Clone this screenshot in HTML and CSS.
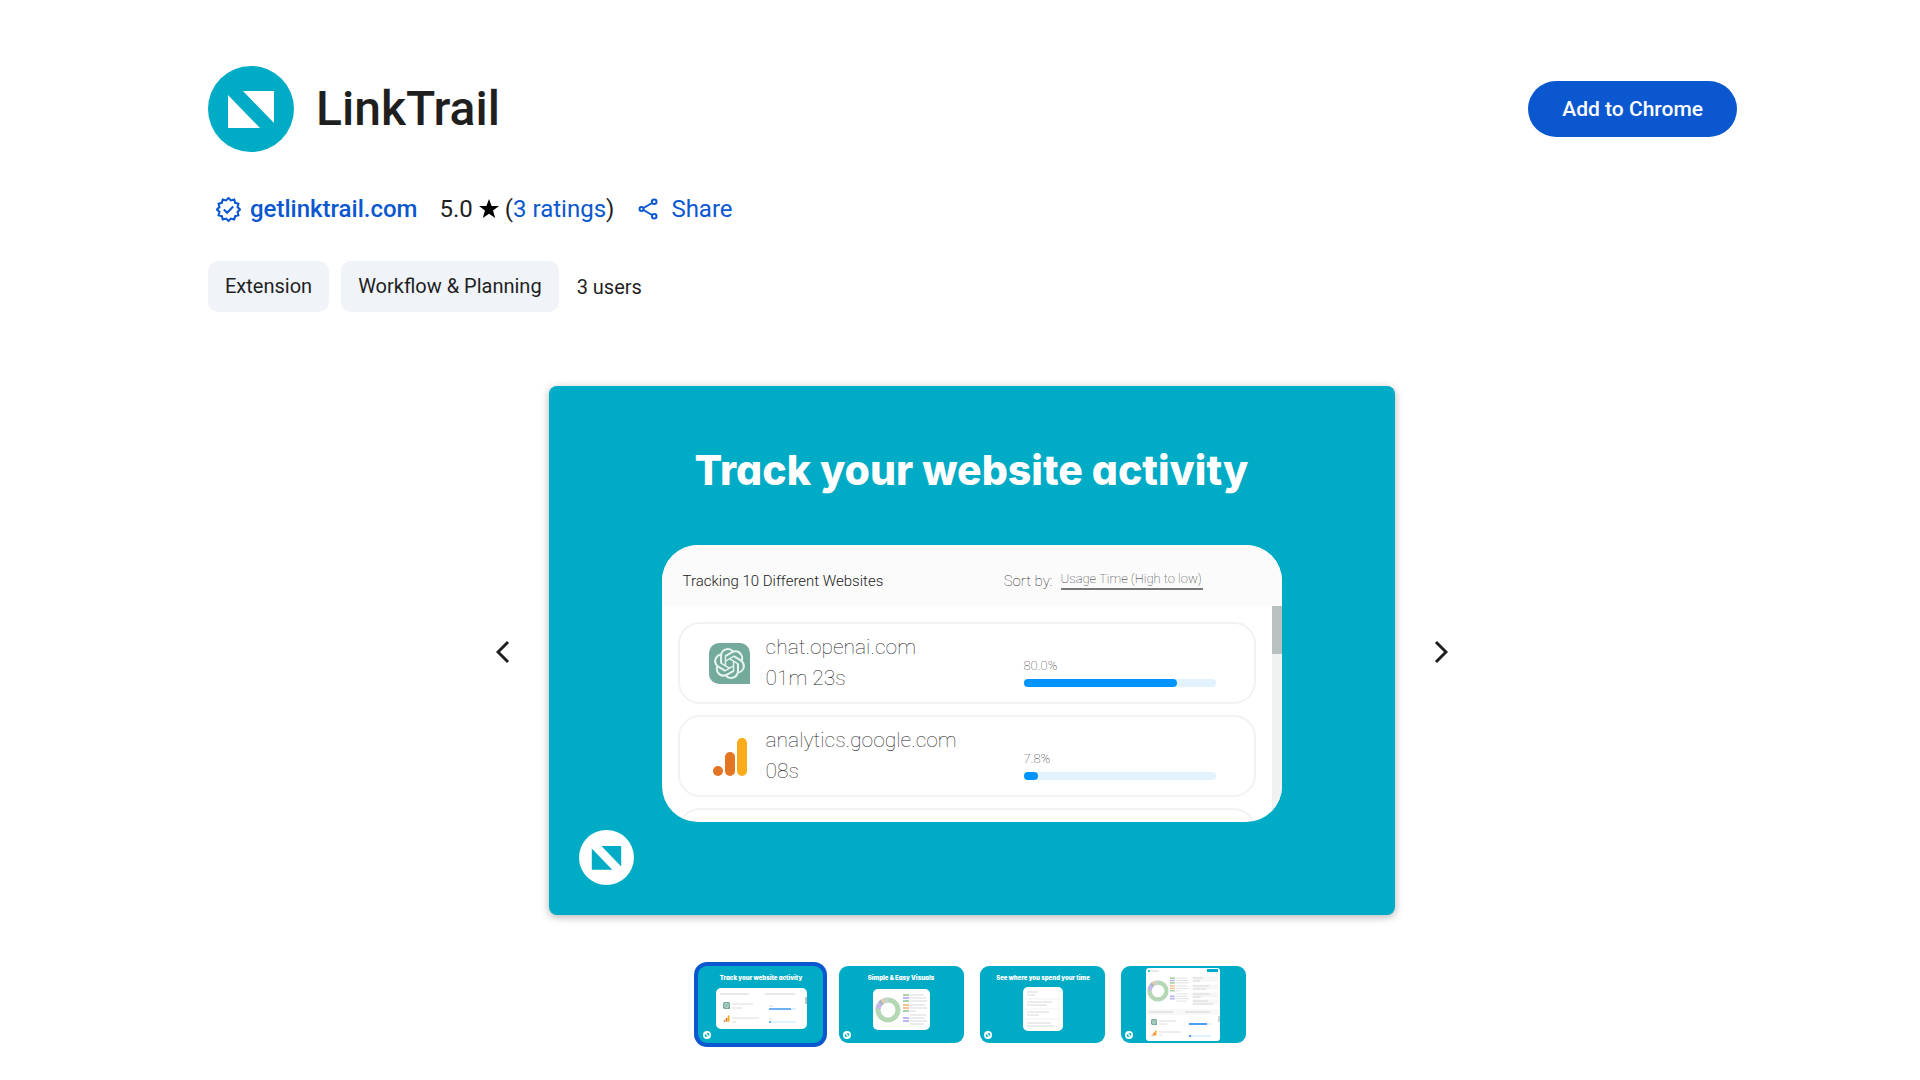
FILE: index.html
```
<!DOCTYPE html>
<html lang="en">
<head>
  <meta charset="UTF-8">
  <meta name="viewport" content="width=device-width, initial-scale=1.0">
  <title>LinkTrail</title>
  <link rel="stylesheet" href="styles.css">
</head>
<body>
  <svg class="defs" aria-hidden="true">
    <symbol id="mark" viewBox="0 0 86 86">
      <circle class="disc" cx="43" cy="43" r="43"/>
      <path class="tri" d="M20 29v33h32zM35 25h31v32z"/>
    </symbol>
    <symbol id="openai" viewBox="0 0 41 41">
      <path fill="#74aa9c" d="M10 0h21a10 10 0 0 1 10 10v31H10A10 10 0 0 1 0 31V10A10 10 0 0 1 10 0z"/>
      <svg x="5" y="5" width="31" height="31" viewBox="0 0 24 24">
        <path fill="#e6f4ef" d="M22.28 9.82a5.98 5.98 0 0 0-.52-4.91 6.05 6.05 0 0 0-6.51-2.9A6.07 6.07 0 0 0 4.98 4.18a5.98 5.98 0 0 0-4 2.9 6.05 6.05 0 0 0 .74 7.1 5.98 5.98 0 0 0 .51 4.91 6.05 6.05 0 0 0 6.51 2.9A5.98 5.98 0 0 0 13.26 24a6.06 6.06 0 0 0 5.77-4.21 5.99 5.99 0 0 0 4-2.9 6.06 6.06 0 0 0-.75-7.07zm-9.02 12.61a4.48 4.48 0 0 1-2.88-1.04l.14-.08 4.78-2.76a.8.8 0 0 0 .39-.68v-6.74l2.02 1.17a.07.07 0 0 1 .04.05v5.58a4.5 4.5 0 0 1-4.49 4.5zM3.6 18.3a4.47 4.47 0 0 1-.54-3.01l.14.09 4.78 2.76a.77.77 0 0 0 .78 0l5.84-3.37v2.33a.08.08 0 0 1-.03.06L9.74 19.95a4.5 4.5 0 0 1-6.14-1.65zM2.34 7.9a4.49 4.49 0 0 1 2.37-1.97v5.67a.77.77 0 0 0 .39.68l5.81 3.35-2.02 1.17a.08.08 0 0 1-.07 0l-4.83-2.79A4.5 4.5 0 0 1 2.34 7.87zm16.6 3.86l-5.84-3.39 2.02-1.16a.08.08 0 0 1 .07 0l4.83 2.79a4.49 4.49 0 0 1-.68 8.1v-5.68a.79.79 0 0 0-.4-.66zm2.01-3.02l-.14-.09-4.77-2.78a.78.78 0 0 0-.79 0L9.41 9.23V6.9a.07.07 0 0 1 .03-.06l4.83-2.79a4.5 4.5 0 0 1 6.68 4.66zM8.31 12.86l-2.02-1.16a.08.08 0 0 1-.04-.06V6.07a4.5 4.5 0 0 1 7.38-3.45l-.14.08-4.78 2.76a.8.8 0 0 0-.39.68zm1.1-2.37l2.6-1.5 2.61 1.5v3l-2.6 1.5-2.61-1.5z"/>
      </svg>
    </symbol>
    <symbol id="analytics" viewBox="0 0 41 41">
      <rect x="28" y="2" width="10" height="38" rx="5" fill="#f9ab1a"/>
      <rect x="16" y="16" width="10" height="24" rx="5" fill="#e37523"/>
      <circle cx="9" cy="35" r="5" fill="#e37523"/>
    </symbol>
    <symbol id="donut" viewBox="0 0 26 26">
      <g fill="none" stroke-width="5">
        <circle cx="13" cy="13" r="10" stroke="#b4d7b4"/>
        <circle cx="13" cy="13" r="10" stroke="#c5b8ea" pathLength="100" stroke-dasharray="9 91" stroke-dashoffset="-52"/>
        <circle cx="13" cy="13" r="10" stroke="#9fb8c8" pathLength="100" stroke-dasharray="4 96" stroke-dashoffset="-61"/>
        <circle cx="13" cy="13" r="10" stroke="#efc9a4" pathLength="100" stroke-dasharray="4 96" stroke-dashoffset="-65"/>
        <circle cx="13" cy="13" r="10" stroke="#c9d3dc" pathLength="100" stroke-dasharray="5 95" stroke-dashoffset="-70"/>
      </g>
    </symbol>
    <symbol id="legend" viewBox="0 0 24 32">
      <path stroke="#a9d2ac" stroke-width="2" d="M0 1h6M0 7h6M0 17h6"/>
      <path stroke="#bcb6f2" stroke-width="2" d="M0 4h6M0 24h6M0 27h6"/>
      <path stroke="#f3c08f" stroke-width="2" d="M0 11h6M0 14h6"/>
      <path stroke="#d6d9dc" d="M7 1h14M7 4h16M7 7h17M7 11h15M7 14h17M7 17h6M7 21h16M7 24h15M7 27h17M7 30h14"/>
    </symbol>
  </svg>

  <main class="page">
    <header class="header">
      <svg class="logo"><use href="#mark"/></svg>
      <h1>LinkTrail</h1>
      <button class="add">Add to Chrome</button>
    </header>

    <div class="meta">
      <a class="site" href="#">
        <svg class="verified" viewBox="0 0 24 24">
          <path d="M12 1l2.300 2.300 3.200-.8.9 3.100 3.100.9-.8 3.200L23 12l-2.300 2.300.8 3.200-3.100.9-.9 3.100-3.200-.8L12 23l-2.300-2.300-3.200.8-.9-3.100-3.100-.9.8-3.200L1 12l2.300-2.300-.8-3.200 3.100-.9.9-3.100 3.200.8z"/>
          <path d="M7.500 12l3.200 3.200 5.800-6"/>
        </svg>
        getlinktrail.com
      </a>
      <div class="rating">
        5.0
        <svg class="star" viewBox="0 0 20 20"><path d="M10 0l2.600 7H20l-6 4.600 2.200 7.400L10 14.700 3.800 19 6 11.600 0 7h7.400z"/></svg>
        <span>(<a href="#">3 ratings</a>)</span>
      </div>
      <button class="share">
        <svg viewBox="0 0 20 22">
          <path d="M5.500 10l8.500-5M5.500 12l8.500 5"/>
          <circle cx="3.500" cy="11" r="2"/>
          <circle cx="16.200" cy="3.700" r="2.300"/>
          <circle cx="16.200" cy="18.300" r="2.300"/>
        </svg>
        Share
      </button>
    </div>

    <div class="tags">
      <a class="tag" href="#">Extension</a>
      <a class="tag" href="#">Workflow &amp; Planning</a>
      <span class="users">3 users</span>
    </div>

    <section class="carousel">
      <button class="arrow" aria-label="Previous"><svg viewBox="0 0 14 24"><path d="M12 2L2 12l10 10"/></svg></button>
      <div class="slide">
        <h2>Track your website activity</h2>
        <div class="panel">
          <div class="panel-head">
            <span class="count">Tracking 10 Different Websites</span>
            <label class="sort" for="sort">Sort by:</label>
            <select id="sort">
              <option>Usage Time (High to low)</option>
            </select>
          </div>
          <div class="panel-body">
            <div class="sites">
              <div class="card">
                <svg class="favicon"><use href="#openai"/></svg>
                <div class="name">chat.openai.com<br>01m 23s</div>
                <div class="usage">80.0%<div class="bar"><div class="fill" style="width: 80%"></div></div></div>
              </div>
              <div class="card">
                <svg class="favicon"><use href="#analytics"/></svg>
                <div class="name">analytics.google.com<br>08s</div>
                <div class="usage">7.8%<div class="bar"><div class="fill" style="width: 7.8%"></div></div></div>
              </div>
              <div class="card"></div>
            </div>
            <div class="scrollbar"><div class="thumb-bar"></div></div>
          </div>
        </div>
        <svg class="badge"><use href="#mark"/></svg>
      </div>
      <button class="arrow" aria-label="Next"><svg viewBox="0 0 14 24"><path d="M2 2l10 10L2 22"/></svg></button>
    </section>

    <nav class="thumbs">
      <button class="thumb active" aria-label="Slide 1">
        <svg viewBox="0 0 125 77">
          <text x="63" y="14">Track your website activity</text>
          <rect x="18" y="22" width="91" height="41" rx="5" fill="#fff"/>
          <path stroke="#d2d2d2" d="M22 28h29M67 28h30"/>
          <use href="#openai" x="25" y="36" width="7" height="7"/>
          <use href="#analytics" x="25" y="49" width="7" height="7"/>
          <path stroke="#dcdcdc" d="M34 38h21M34 42h10M34 52h27M34 56h4M71 40h4M71 53h3"/>
          <path stroke="#e3f2ff" stroke-width="2" d="M71 43h27M71 56h27"/>
          <path stroke="#6fb0f5" stroke-width="2" d="M71 43h22M71 56h2"/>
          <path stroke="#b9c0c0" stroke-width="2" d="M108 31v7"/>
          <use class="mini" href="#mark" x="5" y="65" width="8" height="8"/>
        </svg>
      </button>
      <button class="thumb" aria-label="Slide 2">
        <svg viewBox="0 0 125 77">
          <text x="62" y="14">Simple &amp; Easy Visuals</text>
          <rect x="34" y="23" width="57" height="41" rx="5" fill="#fff"/>
          <use href="#donut" x="36" y="31" width="26" height="26"/>
          <use href="#legend" x="64" y="28" width="24" height="32"/>
          <use class="mini" href="#mark" x="4" y="65" width="8" height="8"/>
        </svg>
      </button>
      <button class="thumb" aria-label="Slide 3">
        <svg viewBox="0 0 125 77">
          <text x="63" y="14">See where you spend your time</text>
          <rect x="43" y="21" width="40" height="44" rx="5" fill="#fff"/>
          <path stroke="#d8d8d8" d="M47 26h11M47 29h8M47 36h25M47 39h20M47 46h22M47 49h12M47 57h24M47 60h27"/>
          <path stroke="#f2f2f2" d="M45 33h36M45 43h36M45 53h36"/>
          <use class="mini" href="#mark" x="4" y="65" width="8" height="8"/>
        </svg>
      </button>
      <button class="thumb" aria-label="Slide 4">
        <svg viewBox="0 0 125 77">
          <rect x="25" y="2" width="74" height="73" rx="3" fill="#fff"/>
          <circle cx="28" cy="5" r="1" fill="#00abc5"/>
          <path stroke="#d2d2d2" d="M30 5h8"/>
          <rect x="86" y="3" width="11" height="3" fill="#00abc5"/>
          <use href="#donut" x="26" y="14" width="22" height="22"/>
          <use href="#legend" x="49" y="11" width="19" height="26"/>
          <path stroke="#f6f6f6" stroke-width="5" d="M71 13h26M71 21h26M71 29h26M71 36h26"/>
          <path stroke="#d8d8d8" d="M72 12h10M72 15h7M72 20h16M72 23h13M72 28h17M72 31h8M72 35h15M72 38h20"/>
          <path stroke="#f8f8f8" stroke-width="6" d="M25 46h74"/>
          <path stroke="#d2d2d2" d="M28 46h24M64 46h25"/>
          <use href="#openai" x="30" y="53" width="6" height="6"/>
          <use href="#analytics" x="30" y="64" width="6" height="6"/>
          <path stroke="#dcdcdc" d="M38 55h17M38 58h8M38 66h22M38 69h3"/>
          <path stroke="#e3f2ff" stroke-width="2" d="M68 58h22M68 70h22"/>
          <path stroke="#4a9cf5" stroke-width="2" d="M68 58h18M68 70h2"/>
          <path stroke="#9aa" d="M98 50v6"/>
          <use class="mini" href="#mark" x="4" y="65" width="8" height="8"/>
        </svg>
      </button>
    </nav>
  </main>
</body>
</html>
```
FILE: styles.css
```
* {
  box-sizing: border-box;
}
body {
  margin: 0;
  background: #fff;
  font-family: Roboto, "Open Sans", sans-serif;
  font-size: 20px;
  color: #1f1f1f;
}
a {
  color: #0b57d0;
  text-decoration: none;
}
button {
  padding: 0;
  border: none;
  background: none;
  font: inherit;
  cursor: pointer;
}
svg {
  display: block;
}
.defs {
  position: absolute;
  width: 0;
  height: 0;
}
.page {
  padding: 66px 183px 32px 208px;
}
.disc {
  fill: var(--disc, #00abc5);
}
.tri {
  fill: var(--tri, #fff);
}
.badge, .mini {
  --disc: #fff;
  --tri: #00abc5;
}

/* Header */
.header, .meta, .tags, .site, .rating, .share {
  display: flex;
  align-items: center;
}
.logo {
  width: 86px;
  height: 86px;
}
h1 {
  margin: 0 auto 0 22px;
  font-size: 48px;
  font-weight: 500;
  line-height: 56px;
}
.add {
  height: 56px;
  padding: 0 34px;
  border-radius: 28px;
  background: #0b57d0;
  color: #fff;
  font-size: 21px;
  font-weight: 500;
}
.meta {
  height: 40px;
  margin: 37px 0 32px 8px;
  font-size: 24px;
}
.site {
  gap: 9px;
  font-weight: 500;
}
.verified {
  width: 25px;
  height: 25px;
}
.verified, .share svg {
  fill: none;
  stroke: #0b57d0;
  stroke-width: 2;
}
.rating {
  gap: 6px;
  margin: 0 24px 0 22px;
}
.star {
  width: 20px;
  height: 20px;
}
.share {
  gap: 13px;
  color: #0b57d0;
}
.share svg {
  width: 20px;
  height: 22px;
}
.tags {
  gap: 12px;
}
.tag {
  padding: 0 17px;
  border-radius: 10px;
  background: #f0f4f9;
  color: #1f1f1f;
  line-height: 51px;
}
.users {
  margin-left: 6px;
}

/* Carousel */
.carousel {
  display: flex;
  justify-content: center;
  align-items: center;
  gap: 39px;
  margin: 74px 2px 0 0;
}
.arrow {
  padding-top: 2px;
}
.arrow svg {
  width: 14px;
  height: 24px;
  fill: none;
  stroke: #1f1f1f;
  stroke-width: 3;
}
.slide {
  position: relative;
  flex: 0 1 846px;
  padding: 60px 113px 93px;
  border-radius: 8px;
  background: #00abc5;
  box-shadow: 0 2px 8px rgba(0, 0, 0, 0.3);
}
h2 {
  margin: 0 0 51px;
  color: #fff;
  font-family: Inter, sans-serif;
  font-size: 41px;
  font-weight: 800;
  font-feature-settings: "cv11";
  line-height: 48px;
  text-align: center;
  white-space: nowrap;
}
.badge {
  position: absolute;
  left: 30px;
  bottom: 30px;
  width: 55px;
  height: 55px;
}
.panel {
  height: 277px;
  border-radius: 36px;
  background: #fff;
  overflow: hidden;
}
.panel-head {
  display: flex;
  align-items: center;
  height: 61px;
  padding: 10px 79px 0 21px;
  background: #fbfbfb;
}
.count {
  margin-right: auto;
  color: #222;
  font-size: 15px;
  font-weight: 300;
}
.sort {
  margin-right: 8px;
  font-size: 15px;
  font-weight: 100;
}
select {
  appearance: none;
  padding: 0 0 2px;
  border: none;
  border-bottom: 2px solid #777;
  border-radius: 0;
  background: none;
  color: #1f1f1f;
  font-family: inherit;
  font-size: 13px;
  font-weight: 100;
}
.panel-body {
  display: flex;
  height: 216px;
}
.sites {
  flex: 1;
  padding: 16px 16px 0;
}
.card {
  display: flex;
  align-items: center;
  height: 82px;
  margin-bottom: 11px;
  padding: 0 38px 0 29px;
  border: 2px solid #f2f2f2;
  border-radius: 22px;
}
.favicon {
  width: 41px;
  height: 41px;
  margin-right: 16px;
}
.name {
  font-size: 21px;
  font-weight: 100;
  line-height: 31px;
}
.usage {
  width: 192px;
  margin: 18px 0 0 auto;
  font-size: 13px;
  font-weight: 100;
}
.bar {
  height: 8px;
  margin-top: 6px;
  border-radius: 4px;
  background: #e3f2ff;
}
.fill {
  height: 8px;
  border-radius: 4px;
  background: #0094ff;
}
.scrollbar {
  width: 10px;
  background: #f0f1f1;
}
.thumb-bar {
  height: 48px;
  background: #b9c0c0;
}

/* Thumbnails */
.thumbs {
  display: flex;
  justify-content: center;
  gap: 16px;
  margin: 51px 2px 0 0;
}
.thumb {
  flex: 0 1 125px;
  border-radius: 9px;
  background: #00abc5;
}
.thumb.active {
  box-shadow: 0 0 0 4px #0b57d0;
}
.thumb text {
  fill: #fff;
  font-family: Inter, sans-serif;
  font-size: 6px;
  font-weight: 900;
  font-feature-settings: "cv11";
  text-anchor: middle;
}
```
